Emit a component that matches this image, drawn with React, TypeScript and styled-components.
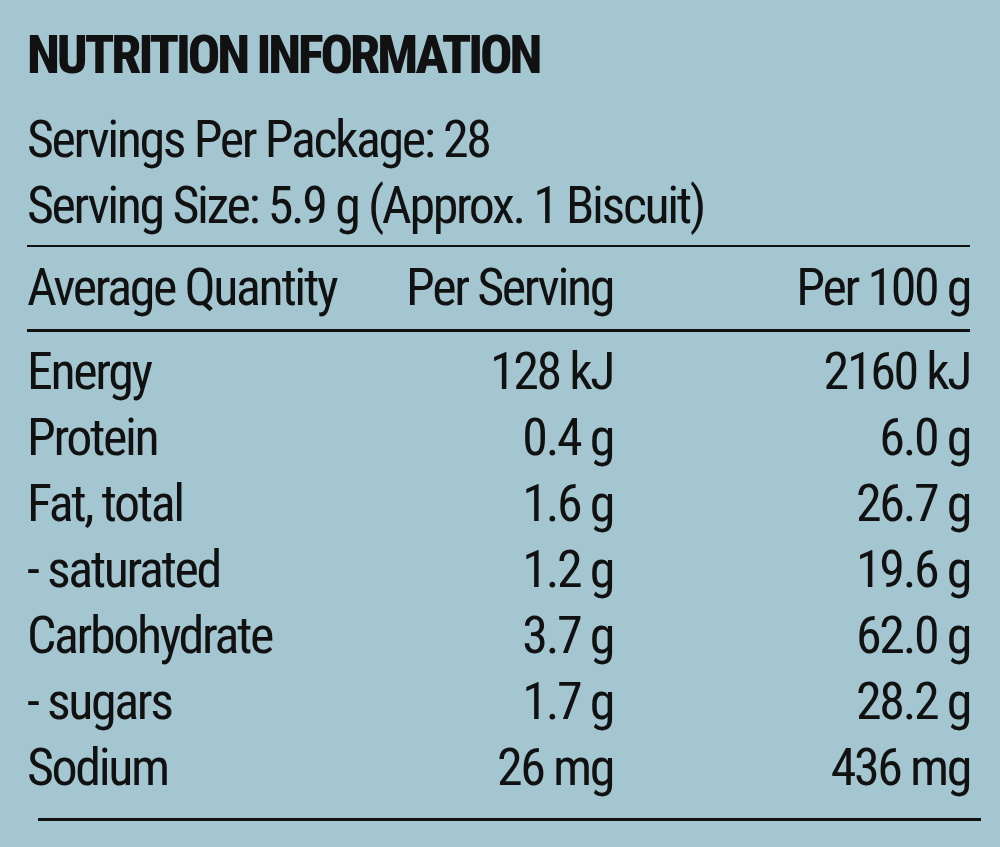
import styled, { createGlobalStyle } from "styled-components";

const GlobalStyle = createGlobalStyle`
  html, body {
    margin: 0;
    padding: 0;
    background: #a3c6d0;
  }
  body {
    font-family: Roboto, "Liberation Sans", sans-serif;
    font-stretch: 75%;
    color: #111;
  }
`;

const Panel = styled.section`
  width: 1000px;
  height: 847px;
  box-sizing: border-box;
  padding: 25px 30px 0 27px;
  background: #a3c6d0;
  overflow: hidden;
`;

const Title = styled.h1`
  margin: 0;
  font-size: 54px;
  line-height: 60px;
  font-weight: 800;
  letter-spacing: -3.1px;
  text-transform: uppercase;
`;

const Line = styled.div`
  font-size: 52px;
  line-height: 66px;
  letter-spacing: -2.4px;
  white-space: nowrap;
`;

const Servings = styled.div`
  margin: 22px 0 6px;
`;

const Rule = styled.hr<{ $thick?: number; $inset?: number }>`
  margin: 0 0 0 ${(p) => p.$inset ?? 0}px;
  border: 0;
  height: ${(p) => p.$thick ?? 2}px;
  background: #111;
`;

const Table = styled.div`
  display: grid;
  grid-template-columns: 373px 213px 357px;
`;

const Cell = styled(Line)<{ $right?: boolean }>`
  text-align: ${(p) => (p.$right ? "right" : "left")};
`;

const HeadRow = styled(Table)`
  margin: 8px 0 8px;
`;

const Body = styled(Table)`
  margin-top: 7px;
`;

const Bottom = styled.div`
  margin: 17px -11px 0 0;
`;

const rows: [string, string, string][] = [
  ["Energy", "128 kJ", "2160 kJ"],
  ["Protein", "0.4 g", "6.0 g"],
  ["Fat, total", "1.6 g", "26.7 g"],
  ["- saturated", "1.2 g", "19.6 g"],
  ["Carbohydrate", "3.7 g", "62.0 g"],
  ["- sugars", "1.7 g", "28.2 g"],
  ["Sodium", "26 mg", "436 mg"],
];

export default function App() {
  return (
    <>
      <GlobalStyle />
      <Panel>
        <Title>Nutrition Information</Title>
        <Servings>
          <Line>Servings Per Package: 28</Line>
          <Line>Serving Size: 5.9 g (Approx. 1 Biscuit)</Line>
        </Servings>
        <Rule $thick={2} />
        <HeadRow>
          <Cell>Average Quantity</Cell>
          <Cell $right>Per Serving</Cell>
          <Cell $right>Per 100 g</Cell>
        </HeadRow>
        <Rule $thick={3} />
        <Body>
          {rows.map(([name, serving, per100]) => [
            <Cell key={name + "-n"}>{name}</Cell>,
            <Cell key={name + "-s"} $right>
              {serving}
            </Cell>,
            <Cell key={name + "-p"} $right>
              {per100}
            </Cell>,
          ])}
        </Body>
        <Bottom>
          <Rule $thick={3} $inset={11} />
        </Bottom>
      </Panel>
    </>
  );
}
